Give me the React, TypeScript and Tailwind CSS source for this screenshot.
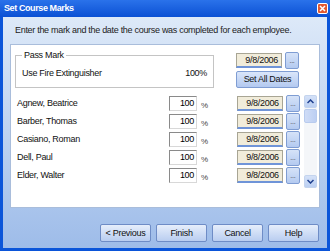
const employees = [
  'Agnew, Beatrice',
  'Barber, Thomas',
  'Casiano, Roman',
  'Dell, Paul',
  'Elder, Walter',
];

const font = { fontFamily: '"Liberation Sans", Arial, sans-serif' };

function DateField() {
  return (
    <div className="flex items-center gap-[3px]">
      <div className="w-[46px] h-[15px] bg-[#f1ecda] border border-[#a8a594] border-b-[#6f94d8] border-b-2 flex items-center justify-end pr-[3px] text-[9px] text-[#111] leading-none">
        9/8/2006
      </div>
      <button className="w-[14px] h-[17px] bg-gradient-to-b from-[#d6e3f8] to-[#b4caf0] border border-[#7f9dd3] rounded-[2px] text-[7px] leading-none text-[#444] flex items-end justify-center pb-[4px]">
        ...
      </button>
    </div>
  );
}

function WizardButton({ label }: { label: string }) {
  return (
    <button className="w-[51px] h-[18px] rounded-[2px] border border-[#6e8cc6] bg-gradient-to-b from-[#e6eefb] to-[#b9cdf0] text-[9px] text-[#111] leading-none">
      {label}
    </button>
  );
}

export default function App() {
  return (
    <div className="w-[330px] h-[251px] bg-[#0b55d9] flex flex-col overflow-hidden tracking-[-0.3px]" style={font}>
      <div className="h-[17px] flex items-center justify-between pl-[4px] pr-[2px] bg-gradient-to-b from-[#2a72ea] to-[#0a50d4]">
        <span className="text-white font-bold text-[9px] leading-none tracking-[-0.4px]">Set Course Marks</span>
        <div className="w-[11px] h-[11px] rounded-[2px] border border-white bg-[#e3572f] flex items-center justify-center">
          <svg width="7" height="7" viewBox="0 0 7 7">
            <path d="M1 1L6 6M6 1L1 6" stroke="white" strokeWidth="1.5" />
          </svg>
        </div>
      </div>

      <div className="flex-1 mx-[3px] mb-[3px] bg-gradient-to-b from-[#dde9f8] to-[#9ebce9] flex flex-col">
        <p className="pt-[9px] pl-[12px] h-[27px] text-[9px] text-[#222] leading-none">
          Enter the mark and the date the course was completed for each employee.
        </p>

        <div className="mx-[7px] h-[164px] bg-white border border-[#a9bddb] flex flex-col">
          <div className="flex pt-[7px] pl-[4px]">
            <fieldset className="w-[199px] h-[37px] border border-[#c4c4c4] px-[6px] -mt-[1px]">
              <legend className="text-[9px] px-[2px] leading-none text-[#111]">Pass Mark</legend>
              <div className="flex justify-between text-[9px] text-[#111] leading-none pt-[9px]">
                <span>Use Fire Extinguisher</span>
                <span>100%</span>
              </div>
            </fieldset>
            <div className="ml-[22px] flex flex-col gap-[2px]">
              <DateField />
              <button className="w-[63px] h-[17px] rounded-[2px] border border-[#7f9dd3] bg-gradient-to-b from-[#dae6fa] to-[#b3c9f0] text-[9px] text-[#111] leading-none">
                Set All Dates
              </button>
            </div>
          </div>

          <div className="flex mt-[7px]">
            <div className="flex flex-col gap-[1px] w-[290px]">
              {employees.map((name) => (
                <div key={name} className="h-[17px] flex items-center">
                  <span className="pl-[6px] w-[158px] text-[9px] text-[#111] leading-none">{name}</span>
                  <div className="w-[28px] h-[15px] border border-[#8a8a8a] border-r-[#d8d8d8] border-b-[#d8d8d8] flex items-center justify-end pr-[2px] text-[9px] leading-none">
                    100
                  </div>
                  <span className="ml-[4px] mt-[4px] text-[8px] leading-none text-[#444]">%</span>
                  <div className="ml-[29px]">
                    <DateField />
                  </div>
                </div>
              ))}
            </div>
            <div className="ml-[3px] w-[13px] h-[93px] bg-[#f4f6f9] flex flex-col justify-between">
              <div>
                <div className="h-[13px] bg-gradient-to-b from-[#d4e1f8] to-[#bcd0f2] border border-[#c4d4ee] rounded-[2px] flex items-center justify-center">
                  <svg width="7" height="5" viewBox="0 0 7 5">
                    <path d="M0.5 4L3.5 1L6.5 4" stroke="#1e3f8f" strokeWidth="1.5" fill="none" />
                  </svg>
                </div>
                <div className="h-[14px] mt-[1px] bg-gradient-to-r from-[#cfdcf6] to-[#bccff3] border border-[#b8cbee] rounded-[2px]" />
              </div>
              <div className="h-[13px] bg-gradient-to-b from-[#d4e1f8] to-[#bcd0f2] border border-[#c4d4ee] rounded-[2px] flex items-center justify-center">
                <svg width="7" height="5" viewBox="0 0 7 5">
                  <path d="M0.5 1L3.5 4L6.5 1" stroke="#1e3f8f" strokeWidth="1.5" fill="none" />
                </svg>
              </div>
            </div>
          </div>
        </div>

        <div className="flex-1 flex items-end justify-end gap-[5px] pr-[8px] pb-[6px]">
          <WizardButton label="< Previous" />
          <WizardButton label="Finish" />
          <WizardButton label="Cancel" />
          <WizardButton label="Help" />
        </div>
      </div>
    </div>
  );
}
